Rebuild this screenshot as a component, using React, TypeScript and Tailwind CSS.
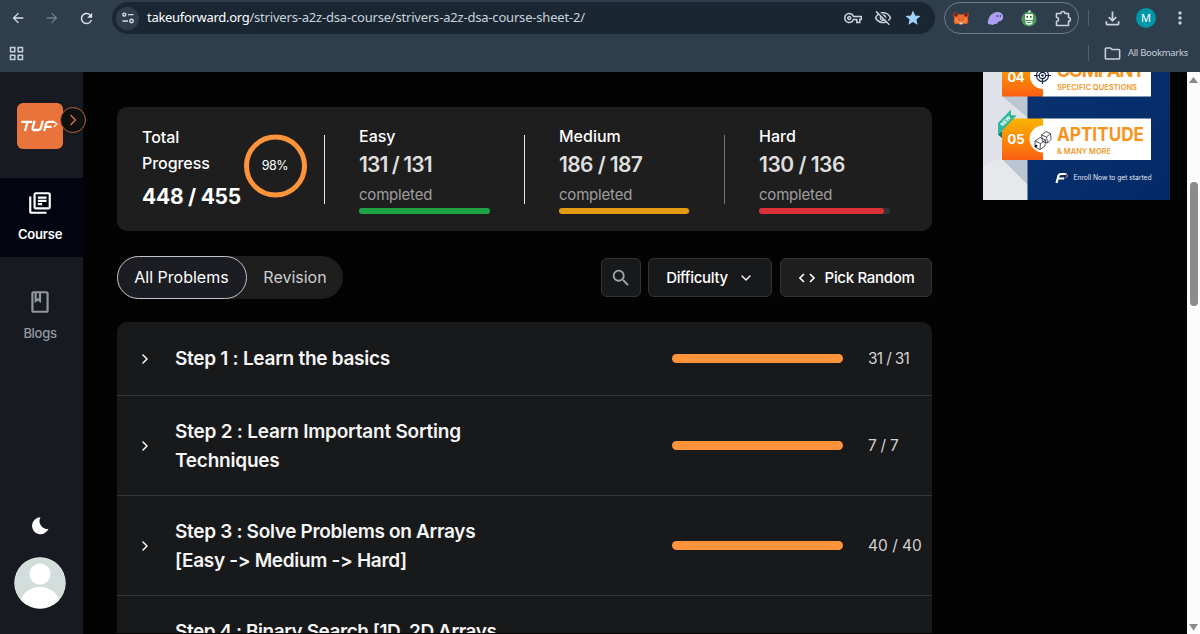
import React from 'react';
import {
  MdArrowBack,
  MdArrowForward,
  MdRefresh,
  MdOutlineVpnKey,
  MdOutlineVisibilityOff,
  MdStar,
  MdMoreVert,
  MdOutlineFolder,
  MdOutlineFileDownload,
  MdOutlineLibraryBooks,
  MdOutlineBook,
  MdSearch,
} from 'react-icons/md';
import { ChevronDown, ChevronRight } from 'lucide-react';

interface Stat {
  label: string;
  solved: number;
  total: number;
  bar: string;
  divider: string;
  tracking: string;
}

interface Step {
  title: string[];
  count?: string;
  titleTracking: string;
  countTracking?: string;
}

const stats: Stat[] = [
  { label: 'Easy', solved: 131, total: 131, bar: 'bg-[#1da344]', divider: 'bg-[#e8e8e8]', tracking: 'tracking-[-0.9px]' },
  { label: 'Medium', solved: 186, total: 187, bar: 'bg-[#e39b12]', divider: 'bg-[#e8e8e8]', tracking: 'tracking-[-0.6px]' },
  { label: 'Hard', solved: 130, total: 136, bar: 'bg-[#dc3237]', divider: 'bg-[#777777]', tracking: 'tracking-[-0.5px]' },
];

const steps: Step[] = [
  { title: ['Step 1 : Learn the basics'], count: '31 / 31', titleTracking: 'tracking-[-0.28px]', countTracking: 'tracking-[-0.7px]' },
  {
    title: ['Step 2 : Learn Important Sorting', 'Techniques'],
    count: '7 / 7',
    titleTracking: 'tracking-[-0.22px]',
    countTracking: 'tracking-[-0.3px]',
  },
  {
    title: ['Step 3 : Solve Problems on Arrays', '[Easy -> Medium -> Hard]'],
    count: '40 / 40',
    titleTracking: 'tracking-[-0.32px]',
    countTracking: 'tracking-normal',
  },
  { title: ['Step 4 : Binary Search [1D, 2D Arrays'], titleTracking: 'tracking-[-0.45px]' },
];

const FoxIcon = () => (
  <svg width="16" height="14" viewBox="0 0 16 14">
    <path d="M1 0.5 6 3.5H10L15 0.5 15.5 5 14.6 8 15.3 11 13.5 13.2 10.5 12.4 9.3 13.5H6.7L5.5 12.4 2.5 13.2.7 11 1.4 8 .5 5Z" fill="#ee6a2c" />
    <path d="M1 .5 5 3 4.500 5.500 1.3 5.500ZM15 .5 11 3 11.500 5.500 14.7 5.500Z" fill="#7d2415" />
    <path d="M1.4 8 5 7.2 6.3 11 5.5 12.4ZM14.6 8 11 7.2 9.7 11 10.5 12.4Z" fill="#ff8a45" />
    <path d="M6.3 11.2H9.7L9.3 13.2H6.7Z" fill="#d9cbc2" />
    <path d="M4.5 8.2 6.4 8.8 5.6 9.6ZM11.5 8.2 9.6 8.8 10.4 9.6Z" fill="#2c2626" />
  </svg>
);

const GhostIcon = () => (
  <svg width="17" height="15" viewBox="0 0 17 15">
    <path d="M.8 11.3C1.6 5.2 5.5 1 10.5 1c3.6 0 5.7 2.2 5.7 5 0 2.7-2.1 4.4-4.6 4.6-.9 2-2.6 2.9-3.8 2.1-1.6 1.7-3.4 1.8-3.9.6-1.6.6-3.2-.1-3.1-2Z" fill="#ab9ff2" />
    <ellipse cx="10.3" cy="5.1" rx=".7" ry="1.1" fill="#3a3560" />
    <ellipse cx="13.2" cy="5.1" rx=".7" ry="1.1" fill="#3a3560" />
  </svg>
);

const RobotIcon = () => (
  <svg width="16" height="18" viewBox="0 0 16 18">
    <circle cx="8" cy="10" r="7.6" fill="#4b9658" />
    <path d="M8 4V1.5M8 2.2h2" stroke="#dff3df" strokeWidth="1.2" />
    <rect x="4" y="5" width="8" height="6" rx="1" fill="#f4fbf3" />
    <rect x="5.5" y="7" width="1.6" height="1.8" fill="#32683c" />
    <rect x="9" y="7" width="1.6" height="1.8" fill="#32683c" />
    <path d="M4.5 12h7v2.2c-1.5 2-5.500 2-7 0Z" fill="#f4fbf3" />
    <path d="M5.5 13.500h5" stroke="#4b9658" />
  </svg>
);

const PuzzleIcon = () => (
  <svg width="17" height="17" viewBox="0 0 17 17" fill="none" stroke="#c7d0d8" strokeWidth="1.6" strokeLinejoin="round">
    <path d="M1.500 3.500H6a2 2 0 0 1 4 0h3.500V7.500a1.900 1.900 0 0 1 0 3.800v4.200h-12v-4a2 2 0 0 0 0-4Z" />
  </svg>
);

const TuneIcon = () => (
  <svg width="12" height="12" viewBox="0 0 12 12" fill="none" stroke="#d5dde4" strokeWidth="1.4">
    <circle cx="2.300" cy="2.600" r="1.500" />
    <path d="M6 2.600h5.500M.5 9H6" />
    <circle cx="9.500" cy="9" r="1.700" />
  </svg>
);

const TufLogo = () => (
  <svg width="46" height="46" viewBox="0 0 46 46">
    <rect width="46" height="46" rx="6" fill="#e8743b" />
    <g fill="none" stroke="#fff" strokeWidth="2.300">
      <path d="M4.500 18.800H15.200M10.600 18.800 8 28" />
      <path d="M17.600 17.700 15.700 24.800Q15.200 27 17.400 27H21.200Q23.300 27 23.900 24.800L25.800 17.700" />
      <path d="M27.200 28 29.100 20.600Q29.700 18.800 31.500 18.800H37M28.500 23.800H34.500" />
    </g>
    <path d="M36.500 18.500 40 21 36.500 24.200" fill="none" stroke="#fff" strokeWidth="1.100" />
  </svg>
);

const BrowserChrome = () => (
  <header className="flex h-[72px] w-full shrink-0 flex-col bg-[#2f3e4d] text-[#c7d0d8]">
    <div className="flex h-9 items-center">
      <div className="flex w-28 shrink-0 items-center gap-[18px] pl-2.5">
        <MdArrowBack className="size-4 text-[#dbe2e8]" />
        <MdArrowForward className="size-4 text-[#6f7f8d]" />
        <MdRefresh className="size-[17px] text-[#dbe2e8]" />
      </div>
      <div className="flex h-8 w-[823px] shrink-0 items-center rounded-full bg-[#1a2733] pr-[13px] pl-1">
        <div className="flex size-[23px] items-center justify-center rounded-full bg-[#2f3e4d]">
          <TuneIcon />
        </div>
        <span className="ml-2 font-['Noto_Sans'] text-[13px] tracking-[-0.19px] text-[#c9d2da]">
          <span className="tracking-[-0.3px] text-white">takeuforward.org</span>/strivers-a2z-dsa-course/strivers-a2z-dsa-course-sheet-2/
        </span>
        <div className="ml-auto flex items-center gap-3">
          <MdOutlineVpnKey className="size-[18px]" />
          <MdOutlineVisibilityOff className="size-[18px]" />
          <MdStar className="size-[18px] text-[#9fd3ff]" />
        </div>
      </div>
      <div className="ml-[9px] flex h-8 w-[135px] shrink-0 items-center justify-between rounded-full border border-[#6e7a86] pr-[6px] pl-2">
        <FoxIcon />
        <GhostIcon />
        <RobotIcon />
        <PuzzleIcon />
      </div>
      <div className="ml-[9px] h-4 w-px bg-[#53616e]" />
      <MdOutlineFileDownload className="ml-[13px] size-[21px]" />
      <div className="ml-[13px] flex size-5 items-center justify-center rounded-full bg-[#0097a7] font-['Noto_Sans'] text-[11px] text-white">M</div>
      <MdMoreVert className="ml-[14px] size-5" />
    </div>
    <div className="flex h-[34px] items-center justify-between pr-3 pl-[9px]">
      <svg width="15" height="15" viewBox="0 0 15 15" fill="none" stroke="#c7d0d8" strokeWidth="1.500">
        <path d="M1.500 1.500h4.300v4.300H1.500ZM9.200 1.500h4.300v4.300H9.200ZM1.500 9.200h4.300v4.300H1.500ZM9.200 9.200h4.300v4.300H9.200Z" />
      </svg>
      <div className="flex items-center">
        <div className="h-4 w-px bg-[#53616e]" />
        <MdOutlineFolder className="ml-[14px] size-[19px]" />
        <span className="ml-1.5 font-['Noto_Sans'] text-[9.5px] tracking-[-0.3px]">All Bookmarks</span>
      </div>
    </div>
  </header>
);

const Sidebar = () => (
  <aside className="flex w-[83px] shrink-0 flex-col items-center bg-[#171a21]">
    <div className="relative flex h-[106px] w-full items-center justify-center pt-0.5 pr-[3px]">
      <TufLogo />
      <div className="absolute top-[35px] left-[60px] flex size-[26px] items-center justify-center rounded-full border border-[#b5623a] bg-[#0f0f10] text-[#e8743b]">
        <svg width="8" height="12" viewBox="0 0 8 12" fill="none" stroke="currentColor" strokeWidth="1.300">
          <path d="M1.500 1 6.500 6 1.500 11" />
        </svg>
      </div>
    </div>
    <div className="flex h-[79px] w-full flex-col items-center bg-[#02040f] pt-3 pr-[3px] text-white">
      <MdOutlineLibraryBooks className="size-[26px]" />
      <span className="mt-2 text-[13px] leading-5 font-semibold tracking-[-0.2px]">Course</span>
    </div>
    <div className="flex w-full flex-col items-center pt-8 pr-[3px] text-[#9298a0]">
      <MdOutlineBook className="size-[26px]" />
      <span className="mt-2 text-[13px] leading-5 font-medium tracking-[-0.3px]">Blogs</span>
    </div>
    <div className="mt-auto mb-[25px] flex flex-col items-center gap-[22px] pr-[3px]">
      <svg width="18" height="18" viewBox="0 0 18 18">
        <path d="M9.500.3A8.500 8.500 0 1 0 17.500 11.800 7.800 7.800 0 0 1 9.500.3Z" fill="#fff" />
      </svg>
      <svg width="52" height="52" viewBox="0 0 52 52">
        <clipPath id="avatar">
          <circle cx="26" cy="26" r="25.300" />
        </clipPath>
        <circle cx="26" cy="26" r="25.700" fill="#f4f7f7" />
        <g clipPath="url(#avatar)">
          <rect width="52" height="52" fill="#d3dddc" />
          <circle cx="26" cy="17" r="10.500" fill="#fff" />
          <ellipse cx="26" cy="48" rx="20" ry="18" fill="#fff" />
        </g>
      </svg>
    </div>
  </aside>
);

const ProgressSummary = () => (
  <section className="flex h-[124px] rounded-[10px] bg-[#1e1e1e]">
    <div className="flex w-[207px] items-start pt-[17px] pl-[25px]">
      <div className="w-[101px] shrink-0 whitespace-nowrap text-white">
        <p className="w-20 text-base leading-[26px] font-medium tracking-[-0.05px] whitespace-normal">Total Progress</p>
        <p className="mt-[5px] text-[21px] leading-8 font-bold tracking-[-0.25px]">448 / 455</p>
      </div>
      <div className="relative mt-[10px] size-16">
        <svg width="64" height="64" viewBox="0 0 64 64">
          <circle cx="32.500" cy="32" r="29" fill="none" stroke="#fd933a" strokeWidth="5" />
        </svg>
        <span className="absolute inset-0 flex items-center justify-center text-[12.5px] tracking-[-0.5px] text-white">98%</span>
      </div>
    </div>
    {stats.map((stat) => (
      <div key={stat.label} className="flex w-[200px] shrink-0">
        <div className={`mt-7 h-[69px] w-px ${stat.divider}`} />
        <div className="ml-[34px] pt-[17px]">
          <p className="text-base leading-6 font-medium text-white">{stat.label}</p>
          <p className={`mt-px text-[21px] leading-[32px] font-semibold text-[#dedede] ${stat.tracking}`}>
            {stat.solved} / {stat.total}
          </p>
          <p className="mt-[2px] text-[15px] leading-6 tracking-[-0.2px] text-[#9d9d9d]">completed</p>
          <div className="mt-px h-1.5 w-[131px] rounded-full bg-[#34343a]">
            <div className={`h-full rounded-full ${stat.bar}`} style={{ width: `${(stat.solved / stat.total) * 100}%` }} />
          </div>
        </div>
      </div>
    ))}
  </section>
);

const Toolbar = () => (
  <div className="mt-[25px] flex items-center justify-between">
    <div className="flex h-[43px] w-[226px] items-center rounded-full bg-[#1e1e1e] text-base">
      <button className="flex h-full w-[130px] items-center justify-center rounded-full border border-[#c3c4ca] bg-[#1c1d22] pr-px pb-0.5 text-white">
        All Problems
      </button>
      <button className="flex-1 pb-0.5 text-[#cfcfcf]">Revision</button>
    </div>
    <div className="flex h-[39px] text-[15px] font-medium tracking-[-0.32px] text-white">
      <button className="flex w-10 items-center justify-center rounded-md border border-[#333436] bg-[#18191b]">
        <MdSearch className="size-[22px] text-[#a3a5a9]" />
      </button>
      <button className="ml-[7px] flex w-[124px] items-center justify-center gap-2.5 rounded-md border border-[#333436] bg-[#18191b]">
        <span className="pt-0.5">Difficulty</span>
        <ChevronDown className="size-4" />
      </button>
      <button className="ml-2 flex w-[152px] items-center justify-center gap-2.5 rounded-md border border-[#333436] bg-[#1e1e1e] pl-px">
        <svg width="16" height="10" viewBox="0 0 16 10" fill="none" stroke="currentColor" strokeWidth="1.600">
          <path d="M5 1 1 5 5 9M11 1 15 5 11 9" />
        </svg>
        <span className="pt-0.5">Pick Random</span>
      </button>
    </div>
  </div>
);

const StepList = () => (
  <section className="mt-[23px] rounded-t-[10px] bg-[#18191b]">
    {steps.map((step) => (
      <div key={step.title[0]} className="flex min-h-[74px] items-center border-b border-[#343536] py-[20.5px]">
        <ChevronRight className="ml-5 size-4 shrink-0 text-white" strokeWidth={2.2} />
        <h3
          className={`ml-[22px] w-[497px] shrink-0 text-[19px] leading-[29px] font-semibold whitespace-nowrap text-[#f5f5f5] [font-feature-settings:'calt'_0] ${step.titleTracking} ${step.count ? '' : 'h-[58px]'}`}
        >
          {step.title.map((line) => (
            <span key={line} className="block">
              {line}
            </span>
          ))}
        </h3>
        <div className="h-[9px] w-[171px] shrink-0 rounded-full bg-[#fd933a]" />
        <span className={`ml-[25px] text-[15.5px] whitespace-nowrap text-[#d2d2d2] ${step.countTracking ?? ''}`}>{step.count}</span>
      </div>
    ))}
  </section>
);

// Bottom part of the course promotion, the rest is scrolled out of view
const PromoBanner = () => (
  <svg width="187" height="128" viewBox="0 0 187 128" className="font-['Inter']">
    <defs>
      <linearGradient id="tag" x1="0" y1="0" x2="0" y2="1">
        <stop offset="0" stopColor="#f7b500" />
        <stop offset="1" stopColor="#fb5f12" />
      </linearGradient>
      <linearGradient id="sea" x1="0" y1="0" x2="1" y2="1">
        <stop offset="0" stopColor="#0a3270" />
        <stop offset="1" stopColor="#022a66" />
      </linearGradient>
    </defs>
    <rect width="187" height="128" fill="#dfe2e8" />
    <path d="M0 95 20 84 45 110V128H0Z" fill="#e6e8ec" />
    <path d="M19 24H45V46ZM19 87H45V113Z" fill="#bcc5d3" />
    <rect x="44.500" width="142.500" height="128" fill="url(#sea)" />

    <rect x="59" width="109" height="24.500" fill="#fff" />
    <rect x="19" y="-17" width="41" height="41.500" fill="url(#tag)" />
    <circle cx="60" cy="4" r="13" fill="#fff" />
    <rect x="60" y="0" width="20" height="24" fill="#fff" />
    <g fill="none" stroke="#16294f" strokeWidth="1.200">
      <circle cx="59.500" cy="3.500" r="6" />
      <circle cx="59.500" cy="3.500" r="3.200" />
      <path d="M51 3.500h5M63 3.500h5M59.500 7v5" />
    </g>
    <circle cx="59.500" cy="3.500" r="1.300" fill="#16294f" />
    <text x="24.500" y="9.500" fontSize="13" fontWeight="700" fill="#fff" textLength="17">04</text>
    <text x="73.500" y="5" fontSize="18.500" fontWeight="700" fill="#f7941d" textLength="89">COMPANY</text>
    <text x="74" y="18" fontSize="7.800" fontWeight="600" fill="#f0992d" textLength="80" lengthAdjust="spacingAndGlyphs">SPECIFIC QUESTIONS</text>

    <rect x="59" y="46.500" width="109" height="41.500" fill="#fff" />
    <rect x="19" y="46.500" width="41" height="41.500" fill="url(#tag)" />
    <circle cx="60" cy="67" r="13.500" fill="#fff" />
    <rect x="60" y="50" width="14" height="34" fill="#fff" />
    <g fill="none" stroke="#29303b" strokeWidth=".8">
      <path d="M58.500 63 63 59.500 67.500 61.500 68 67.500 64.500 71 59.500 69.500ZM58.500 63 63.500 65 67.500 61.500M63.500 65 64.500 71" />
      <path d="M52 69 57 65.500 62.500 68 62 74 57 77.500 52 75ZM52 69 57.500 71.500 62.500 68M57.500 71.500 57 77.500" />
    </g>
    <circle cx="53" cy="74" r="1.300" fill="#10151c" />
    <text x="24.500" y="71.500" fontSize="13" fontWeight="700" fill="#fff" textLength="17">05</text>
    <text x="74" y="69" fontSize="18.500" fontWeight="700" fill="#f7941d" textLength="87" lengthAdjust="spacingAndGlyphs">APTITUDE</text>
    <text x="74" y="81.500" fontSize="7.800" fontWeight="600" fill="#f0992d" textLength="54" lengthAdjust="spacingAndGlyphs">&amp; MANY MORE</text>

    <path d="M15 58 19 60V66L15.500 63Z" fill="#147260" />
    <path d="M15 51 28 37.500V43L33.500 43.500 18 60 15 63Z" fill="#31b89c" />
    <text x="19.500" y="54.500" fontSize="5" fontWeight="700" fill="#fff" textLength="12" transform="rotate(-45 19.500 54.500)">NEW</text>

    <path d="M73.500 111 75.500 103.500Q76 102 78.500 102H83.500M75 106.500H81" fill="none" stroke="#fff" strokeWidth="2.200" />
    <path d="M82 101.500 85 104 81.500 106.500" fill="none" stroke="#d48b7a" />
    <text x="90.500" y="108" fontSize="6.900" fill="#e3e9f3" textLength="78" lengthAdjust="spacingAndGlyphs">Enroll Now to get started</text>
  </svg>
);

const Scrollbar = () => (
  <div className="flex w-[13px] shrink-0 flex-col items-center bg-[#fcfcfc] pt-[5px] pb-[3px]">
    <svg width="9" height="7" viewBox="0 0 9 7">
      <path d="M4.500 0 9 6H0Z" fill="#8a8a8a" />
    </svg>
    <div className="mt-[98px] h-[124px] w-2 rounded-full bg-[#8b8b8b]" />
    <svg width="9" height="7" viewBox="0 0 9 7" className="mt-auto">
      <path d="M0 0H9L4.500 6.500Z" fill="#8a8a8a" />
    </svg>
  </div>
);

export default function App() {
  return (
    <div className="flex h-[634px] w-[1200px] flex-col overflow-hidden bg-[#030303] font-['Inter',sans-serif]">
      <BrowserChrome />
      <div className="flex h-[562px] min-h-0">
        <Sidebar />
        <main className="ml-[34px] h-[561px] w-[815px] shrink-0 overflow-hidden pt-[35px]">
          <ProgressSummary />
          <Toolbar />
          <StepList />
        </main>
        <div className="ml-[51px] w-[204px] shrink-0">
          <PromoBanner />
        </div>
        <Scrollbar />
      </div>
    </div>
  );
}
